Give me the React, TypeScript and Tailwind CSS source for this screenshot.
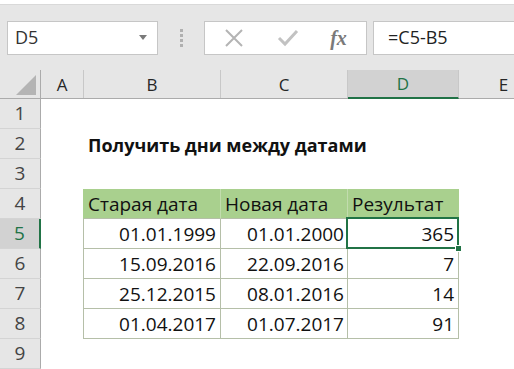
import React from "react";

const tableBorder = "border-[#b5bfa8]";

function RowHead({ n, active }: { n: number; active?: boolean }) {
  return (
    <div
      className={
        "w-[41px] h-full flex items-center justify-center border-b border-[#d4d4d4] text-[19px] " +
        (active
          ? "bg-[#d2d2d2] text-[#217346] border-r-2 border-r-[#217346]"
          : "bg-[#e6e6e6] text-[#444] border-r border-r-[#ababab]")
      }
    >
      {n}
    </div>
  );
}

function EmptyRow({ n, children }: { n: number; children?: React.ReactNode }) {
  return (
    <div className="flex h-[30px]">
      <RowHead n={n} />
      <div className="flex-1 relative">{children}</div>
    </div>
  );
}

function DataRow({
  n,
  b,
  c,
  d,
  active,
}: {
  n: number;
  b: string;
  c: string;
  d: string;
  active?: boolean;
}) {
  return (
    <div className="flex h-[30px]">
      <RowHead n={n} active={active} />
      <div className="w-[42px]" />
      <div
        className={`w-[138px] border-l border-r border-b ${tableBorder} flex items-center justify-end pr-[4px] pt-[1px]`}
      >
        {b}
      </div>
      <div
        className={`w-[127px] border-r border-b ${tableBorder} flex items-center justify-end pr-[3px] pt-[1px]`}
      >
        {c}
      </div>
      <div
        className={`w-[111px] border-r border-b ${tableBorder} flex items-center justify-end pr-[4px] pt-[1px] relative`}
      >
        {d}
        {active && (
          <>
            <div className="absolute left-[-2px] top-[-2px] right-[-1px] bottom-[-1px] border-2 border-[#217346] z-10" />
            <div className="absolute right-[-4px] bottom-[-4px] w-[7px] h-[7px] bg-[#217346] border border-white z-20" />
          </>
        )}
      </div>
      <div className="flex-1" />
    </div>
  );
}

export default function App() {
  return (
    <div className="w-[514px] h-[369px] overflow-hidden bg-white font-['Open_Sans',sans-serif] text-[#111]">
      {/* top strip */}
      <div className="h-[5px] bg-white border-b border-[#d9d9d9]" />
      {/* toolbar */}
      <div className="h-[65px] bg-[#e6e6e6] flex items-center">
        <div className="ml-[7px] w-[151px] h-[34px] bg-white border border-[#c6c6c6] flex items-center pl-[7px] pr-[10px]">
          <span className="text-[18px] text-[#333] flex-1">D5</span>
          <svg width="8" height="5" viewBox="0 0 8 5">
            <path d="M0 0 L8 0 L4 5 Z" fill="#7a7a7a" />
          </svg>
        </div>
        <div className="w-[46px] flex flex-col items-center gap-[2px]">
          <div className="w-[3px] h-[3px] bg-[#b0b0b0]" />
          <div className="w-[3px] h-[3px] bg-[#b0b0b0]" />
          <div className="w-[3px] h-[3px] bg-[#b0b0b0]" />
          <div className="w-[3px] h-[3px] bg-[#b0b0b0]" />
        </div>
        <div className="w-[163px] h-[34px] bg-white border border-[#c6c6c6] flex items-center">
          <div className="w-[56px] flex justify-center pl-[2px]">
            <svg width="20" height="20" viewBox="0 0 20 20">
              <path d="M2 2 L18 18 M18 2 L2 18" stroke="#b4b4b4" strokeWidth="2" fill="none" />
            </svg>
          </div>
          <div className="w-[54px] flex justify-center">
            <svg width="22" height="18" viewBox="0 0 22 18">
              <path d="M2 9 L8 15 L20 2" stroke="#c2c2c2" strokeWidth="3" fill="none" />
            </svg>
          </div>
          <div className="flex-1 flex justify-center pr-[4px]">
            <span className="font-['Liberation_Serif',serif] italic font-bold text-[20px] text-[#7a7a7a] leading-none">
              fx
            </span>
          </div>
        </div>
        <div className="ml-[6px] flex-1 h-[34px] bg-white border border-r-0 border-[#c6c6c6] flex items-center pl-[14px]">
          <span className="text-[18px] text-[#222]">=C5-B5</span>
        </div>
      </div>
      {/* column headers */}
      <div className="flex h-[29px] bg-[#e6e6e6] border-b border-[#ababab] text-[17px] text-[#262626]">
        <div className="w-[41px] border-r border-[#ababab] relative">
          <svg className="absolute left-[16px] top-[5px]" width="20" height="20" viewBox="0 0 20 20">
            <path d="M20 0 L20 20 L0 20 Z" fill="#b4b4b4" />
          </svg>
        </div>
        <div className="w-[43px] border-r border-[#c8c8c8] flex items-center justify-center pt-[1px]">A</div>
        <div className="w-[137px] border-r border-[#c8c8c8] flex items-center justify-center pt-[1px]">B</div>
        <div className="w-[127px] border-r border-[#c8c8c8] flex items-center justify-center pt-[1px]">C</div>
        <div className="w-[111px] bg-[#d2d2d2] text-[#217346] border-b-2 border-[#217346] mb-[-1px] border-r border-r-[#c8c8c8] flex items-center justify-center pt-[1px]">
          D
        </div>
        <div className="flex-1 flex items-center justify-center pl-[34px] pt-[1px]">E</div>
      </div>
      {/* rows */}
      <div className="text-[19px]">
        <EmptyRow n={1} />
        <EmptyRow n={2}>
          <div className="absolute left-[47px] top-0 h-full flex items-center font-bold whitespace-nowrap text-[18px] pt-[2px]">
            Получить дни между датами
          </div>
        </EmptyRow>
        <EmptyRow n={3} />
        <div className="flex h-[30px]">
          <RowHead n={4} />
          <div className="w-[42px]" />
          <div className={`w-[138px] bg-[#a9d08e] border-l border-l-[#a9d08e] border-r border-r-[#c2dcae] border-b ${tableBorder} flex items-center pl-[4px] pt-[1px] whitespace-nowrap`}>
            Старая дата
          </div>
          <div className={`w-[127px] bg-[#a9d08e] border-r border-r-[#c2dcae] border-b ${tableBorder} flex items-center pl-[4px] pt-[1px] whitespace-nowrap`}>
            Новая дата
          </div>
          <div className={`w-[111px] bg-[#a9d08e] border-r border-r-[#a9d08e] border-b ${tableBorder} flex items-center pl-[4px] pt-[1px] whitespace-nowrap`}>
            Результат
          </div>
          <div className="flex-1" />
        </div>
        <DataRow n={5} b="01.01.1999" c="01.01.2000" d="365" active />
        <DataRow n={6} b="15.09.2016" c="22.09.2016" d="7" />
        <DataRow n={7} b="25.12.2015" c="08.01.2016" d="14" />
        <DataRow n={8} b="01.04.2017" c="01.07.2017" d="91" />
        <EmptyRow n={9} />
      </div>
    </div>
  );
}
